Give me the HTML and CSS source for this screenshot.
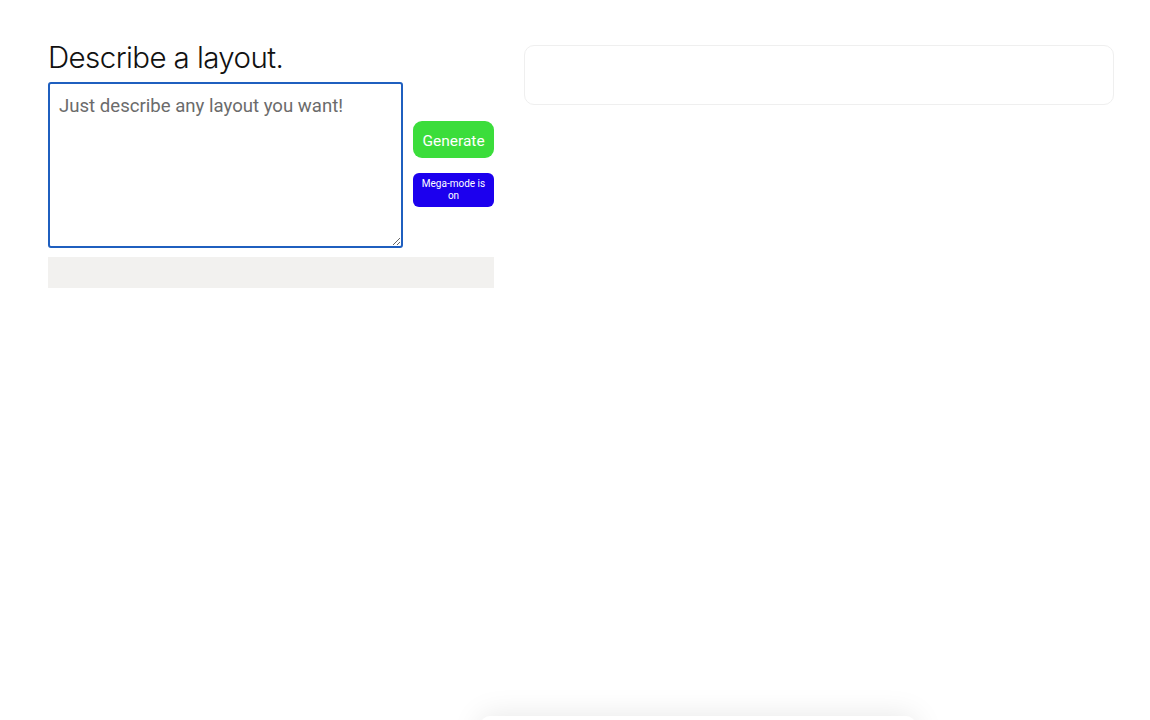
FILE: index.html
```html
<!DOCTYPE html>
<html lang="en">
<head>
    <meta charset="UTF-8">
    <meta name="viewport" content="width=device-width, initial-scale=1.0">
    <title>Describe a layout</title>
    <link rel="stylesheet" href="styles.css">
</head>
<body>
    <div class="page">
        <!-- left side: prompt + buttons -->
        <div class="editor">
            <h1>Describe a layout.</h1>
            <div class="prompt-row">
                <textarea class="prompt" placeholder="Just describe any layout you want!"></textarea>
                <div class="actions">
                    <button class="btn-generate">Generate</button>
                    <button class="btn-mega">Mega-mode is on</button>
                </div>
            </div>
            <div class="status-bar"></div>
        </div>

        <!-- right side: output card -->
        <div class="output">
            <div class="output-card"></div>
        </div>
    </div>

    <!-- floating panel peeking from the bottom -->
    <div class="drawer"></div>
</body>
</html>
```

FILE: styles.css
```css
/* page basics */
body {
    margin: 0;
    font-family: 'Liberation Sans', Arial, sans-serif;
    background: #fff;
    color: #111;
    overflow: hidden;
}

.page {
    display: flex;
    gap: 30px;
    padding: 39px 36px 0 48px;
}

/* left column */
.editor {
    width: 446px;
    flex-shrink: 0;
}

h1 {
    font-family: 'Inter', 'Liberation Sans', sans-serif;
    font-weight: 300;
    font-size: 29.5px;
    letter-spacing: -0.6px;
    margin: 0 0 7px 0;
    line-height: 36px;
}

.prompt-row {
    display: flex;
    gap: 10px;
}

.prompt {
    width: 355px;
    height: 166px;
    box-sizing: border-box;
    border: 2px solid #1f5fbf;
    border-radius: 3px;
    padding: 11px 9px;
    font-family: 'Roboto', 'Liberation Sans', sans-serif;
    font-size: 18.6px;
    resize: both;
    outline: none;
    margin: 0;
}

.prompt::placeholder {
    color: #6b6b6b;
}

.actions {
    display: flex;
    flex-direction: column;
    gap: 15px;
    padding-top: 39px;
    width: 81px;
}

/* buttons */
button {
    border: none;
    cursor: pointer;
    color: #fff;
    font-family: 'Roboto', 'Liberation Sans', sans-serif;
    width: 81px;
    padding: 0;
}

.btn-generate {
    height: 37px;
    border-radius: 9px;
    background-color: #3bdd3b;
    font-size: 15.5px;
    padding-top: 2px;
}

.btn-mega {
    height: 34px;
    border-radius: 6px;
    background-color: #1c00ee;
    font-size: 10px;
    line-height: 12px;
    padding: 0 4px;
}

.status-bar {
    height: 31px;
    margin-top: 9px;
    background-color: #f2f1ef;
}

/* right column */
.output {
    flex: 1;
    padding-top: 6px;
}

.output-card {
    height: 58px;
    border: 1px solid #efefef;
    border-radius: 10px;
}

/* bottom panel */
.drawer {
    position: fixed;
    left: 480px;
    top: 716px;
    width: 436px;
    height: 60px;
    background: #fff;
    border-radius: 10px;
    box-shadow: 0 0 30px rgba(0, 0, 0, 0.1);
}
```
